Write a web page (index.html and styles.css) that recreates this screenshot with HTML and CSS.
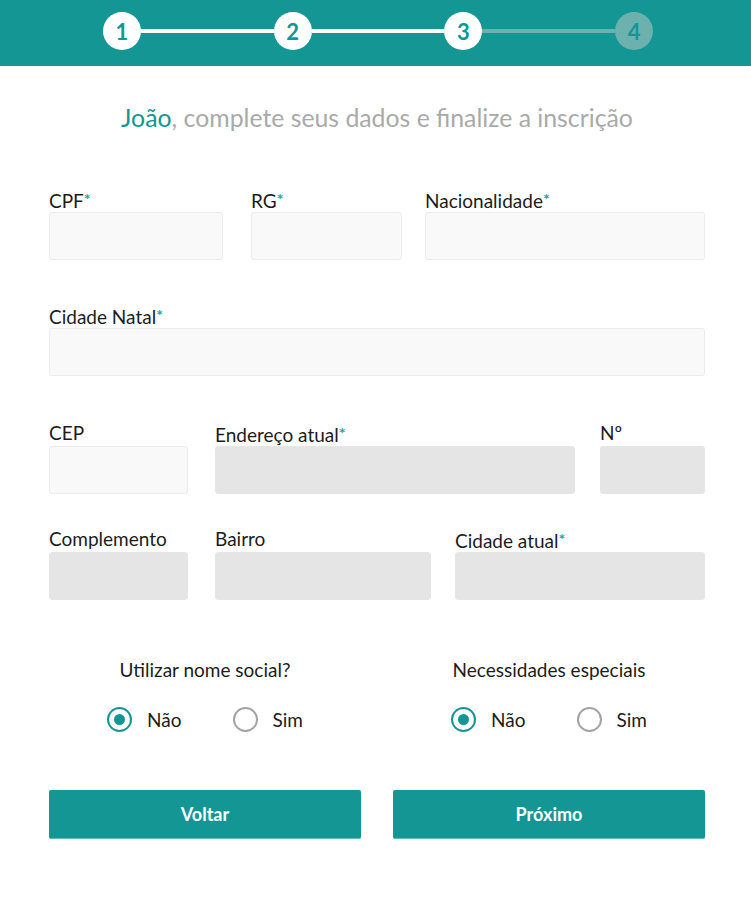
FILE: index.html
```html
<!DOCTYPE html>
<html lang="pt-BR">
<head>
<meta charset="utf-8">
<title>Inscrição</title>
<link rel="stylesheet" href="styles.css">
</head>
<body>
<header class="topbar">
  <div class="stepper">
    <span class="step done">1</span>
    <span class="bar done"></span>
    <span class="step done">2</span>
    <span class="bar done"></span>
    <span class="step done">3</span>
    <span class="bar todo"></span>
    <span class="step todo">4</span>
  </div>
</header>
<main class="content">
  <h1 class="title"><span class="name">João</span>, complete seus dados e finalize a inscrição</h1>

  <div class="row row1">
    <div class="field w-cpf"><label>CPF<span class="req">*</span></label><div class="input"></div></div>
    <div class="field w-rg"><label>RG<span class="req">*</span></label><div class="input"></div></div>
    <div class="field w-nac"><label>Nacionalidade<span class="req">*</span></label><div class="input"></div></div>
  </div>

  <div class="row row2">
    <div class="field w-full"><label>Cidade Natal<span class="req">*</span></label><div class="input"></div></div>
  </div>

  <div class="row row3">
    <div class="field w-cep"><label>CEP</label><div class="input"></div></div>
    <div class="field w-end"><label>Endereço atual<span class="req">*</span></label><div class="input disabled"></div></div>
    <div class="field w-num"><label>Nº</label><div class="input disabled"></div></div>
  </div>

  <div class="row row4">
    <div class="field w-comp"><label>Complemento</label><div class="input disabled"></div></div>
    <div class="field w-bai"><label>Bairro</label><div class="input disabled"></div></div>
    <div class="field w-cid"><label>Cidade atual<span class="req">*</span></label><div class="input disabled"></div></div>
  </div>

  <div class="options">
    <div class="group">
      <div class="group-title">Utilizar nome social?</div>
      <div class="radios">
        <span class="radio"><span class="dot on"></span>Não</span>
        <span class="radio"><span class="dot"></span>Sim</span>
      </div>
    </div>
    <div class="group">
      <div class="group-title">Necessidades especiais</div>
      <div class="radios">
        <span class="radio"><span class="dot on"></span>Não</span>
        <span class="radio"><span class="dot"></span>Sim</span>
      </div>
    </div>
  </div>

  <div class="actions">
    <button class="btn">Voltar</button>
    <button class="btn">Próximo</button>
  </div>
</main>
</body>
</html>
```
FILE: styles.css
```css
* { box-sizing: border-box; }
html, body { margin: 0; padding: 0; background: #fff; }
body {
  font-family: Lato, "Open Sans", sans-serif;
  color: #1c1c1c;
  width: 751px;
  height: 902px;
  overflow: hidden;
}

.topbar {
  height: 66px;
  background: #139694;
  display: flex;
  align-items: center;
}
.stepper {
  margin-left: 103px;
  width: 550px;
  display: flex;
  align-items: center;
}
.step {
  width: 38px;
  height: 38px;
  border-radius: 50%;
  display: flex;
  align-items: center;
  justify-content: center;
  font-weight: 700;
  font-size: 22px;
  color: #139694;
  flex: none;
  margin-top: -4px;
}
.step.done { background: #fff; }
.step.todo { background: #6cb1ad; }
.bar { flex: 1; height: 4px; margin-top: -4px; }
.bar.done { background: #fff; }
.bar.todo { background: #6cb1ad; }

.content { margin-left: 49px; width: 656px; }

.title {
  margin: 37px 0 0;
  height: 30px;
  line-height: 30px;
  font-size: 24.8px;
  font-weight: 400;
  text-align: center;
  color: #a9a9a9;
}
.title .name { color: #139694; }

.row { display: flex; }
.row1 { margin-top: 55px; }
.row2 { margin-top: 44px; }
.row3 { margin-top: 46px; }
.row4 { margin-top: 34px; }

.field label {
  display: block;
  height: 22px;
  line-height: 22px;
  font-size: 19px;
  margin-bottom: 2px;
  white-space: nowrap;
}
.req {
  color: #1fa6a2;
  font-size: 16px;
  vertical-align: 3px;
  font-weight: 700;
}
.input {
  height: 48px;
  background: #f9f9f9;
  border: 1px solid #ececec;
  border-radius: 3px;
}
.input.disabled { background: #e5e5e5; border-color: #e5e5e5; }

.w-cpf { width: 174px; }
.w-rg { width: 151px; margin-left: 28px; }
.w-nac { flex: 1; margin-left: 23px; }
.w-full { flex: 1; }
.w-cep { width: 139px; }
.w-end { width: 360px; margin-left: 27px; }
.w-num { flex: 1; margin-left: 25px; }
.w-comp { width: 139px; }
.w-bai { width: 216px; margin-left: 27px; }
.w-cid { flex: 1; margin-left: 24px; }

.options {
  margin-top: 58px;
  display: grid;
  grid-template-columns: 1fr 1fr;
  column-gap: 32px;
}
.group { display: flex; flex-direction: column; align-items: center; }
.group-title { font-size: 19px; line-height: 24px; height: 24px; }
.radios { margin-top: 25px; display: flex; gap: 51px; }
.radio {
  display: flex;
  align-items: center;
  gap: 15px;
  font-size: 19px;
  line-height: 24px;
}
.dot {
  width: 25px;
  height: 25px;
  border-radius: 50%;
  border: 2px solid #a3a3a3;
  display: flex;
  align-items: center;
  justify-content: center;
}
.dot.on { border-color: #139694; }
.dot.on::after {
  content: "";
  width: 11px;
  height: 11px;
  border-radius: 50%;
  background: #139694;
}

.actions {
  margin-top: 58px;
  display: grid;
  grid-template-columns: 1fr 1fr;
  column-gap: 32px;
}
.btn {
  height: 49px;
  border: none;
  border-bottom: 1px solid #62b8b5;
  border-radius: 2px;
  background: #139694;
  color: #fff;
  font-family: Lato, "Open Sans", sans-serif;
  font-weight: 700;
  font-size: 18px;
  padding: 0;
}
```
